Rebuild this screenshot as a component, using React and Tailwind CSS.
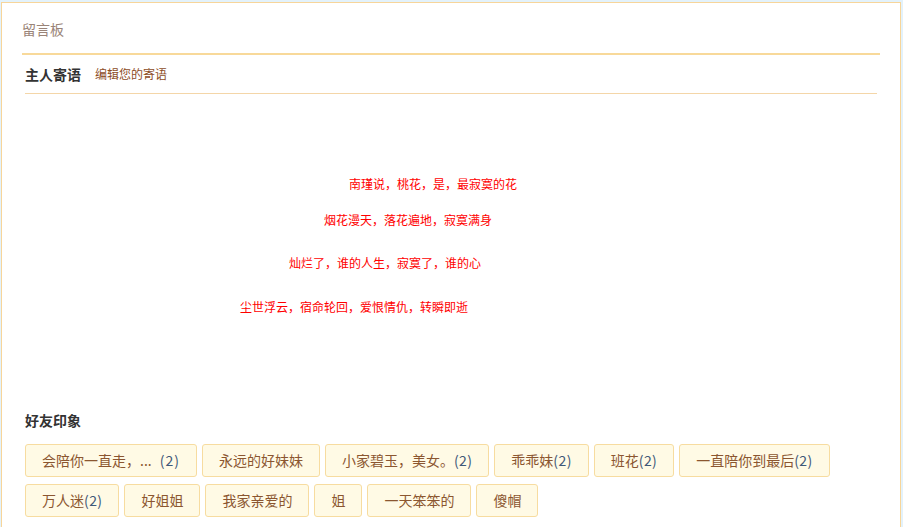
const tags1 = [
  ["会陪你一直走，...", "(2)", "ml-[8px] tracking-[1px]"],
  ["永远的好妹妹", ""],
  ["小家碧玉，美女。", "(2)", "tracking-[0.4px]"],
  ["乖乖妹", "(2)", "tracking-[0.4px]"],
  ["班花", "(2)", "tracking-[0.4px]"],
  ["一直陪你到最后", "(2)", "tracking-[0.4px]"],
];
const tags2 = [
  ["万人迷", "(2)", "tracking-[0.4px]"],
  ["好姐姐", ""],
  ["我家亲爱的", ""],
  ["姐", ""],
  ["一天笨笨的", ""],
  ["傻帽", ""],
];

function Tag({ t, n, cls }) {
  return (
    <div className="flex h-[33px] items-center rounded-[3px] border border-[#f7dca0] bg-[#fffae5] px-4 text-[14px] text-[#8b5630] whitespace-nowrap">
      <span>{t}</span>
      {n && <span className={"text-[#3e5878] " + (cls || "")}>{n}</span>}
    </div>
  );
}

export default function App() {
  return (
    <div
      className="h-[527px] w-[903px] overflow-hidden bg-[#e3f2fb] pt-[2px] pl-[1px]"
      style={{ fontFamily: '"Noto Sans CJK SC", "Noto Sans", sans-serif' }}
    >
      <div className="h-[540px] w-[900px] border border-[#f7d59a] bg-white">
        <div className="px-[20px]">
          <div className="pt-[16px] pb-[14px] text-[14px] leading-[20px] text-[#9a8478]">留言板</div>
          <div className="h-[2px] bg-[#f8d99a]" />
        </div>
        <div className="pl-[23px] pr-[23px]">
          <div className="flex h-[39px] items-center border-b border-[#f4d6a8]">
            <span className="text-[14px] font-bold leading-[20px] text-[#333333]">主人寄语</span>
            <span className="ml-[14px] text-[12px] leading-[16px] text-[#8d4d1f]">编辑您的寄语</span>
          </div>
          <div className="text-[12px] leading-[16px] text-[#ff0000]">
            <p className="mt-[82px] ml-[324px]">南瑾说，桃花，是，最寂寞的花</p>
            <p className="mt-[20px] ml-[299px]">烟花漫天，落花遍地，寂寞满身</p>
            <p className="mt-[27px] ml-[264px]">灿烂了，谁的人生，寂寞了，谁的心</p>
            <p className="mt-[28px] ml-[215px]">尘世浮云，宿命轮回，爱恨情仇，转瞬即逝</p>
          </div>
          <div className="mt-[95px] text-[14px] font-bold leading-[20px] text-[#333333]">好友印象</div>
          <div className="mt-[14px] flex flex-col gap-[7px]">
            <div className="flex gap-[5px]">
              {tags1.map(([t, n, c]) => (
                <Tag key={t} t={t} n={n} cls={c} />
              ))}
            </div>
            <div className="flex gap-[5px]">
              {tags2.map(([t, n, c]) => (
                <Tag key={t} t={t} n={n} cls={c} />
              ))}
            </div>
          </div>
        </div>
      </div>
    </div>
  );
}
